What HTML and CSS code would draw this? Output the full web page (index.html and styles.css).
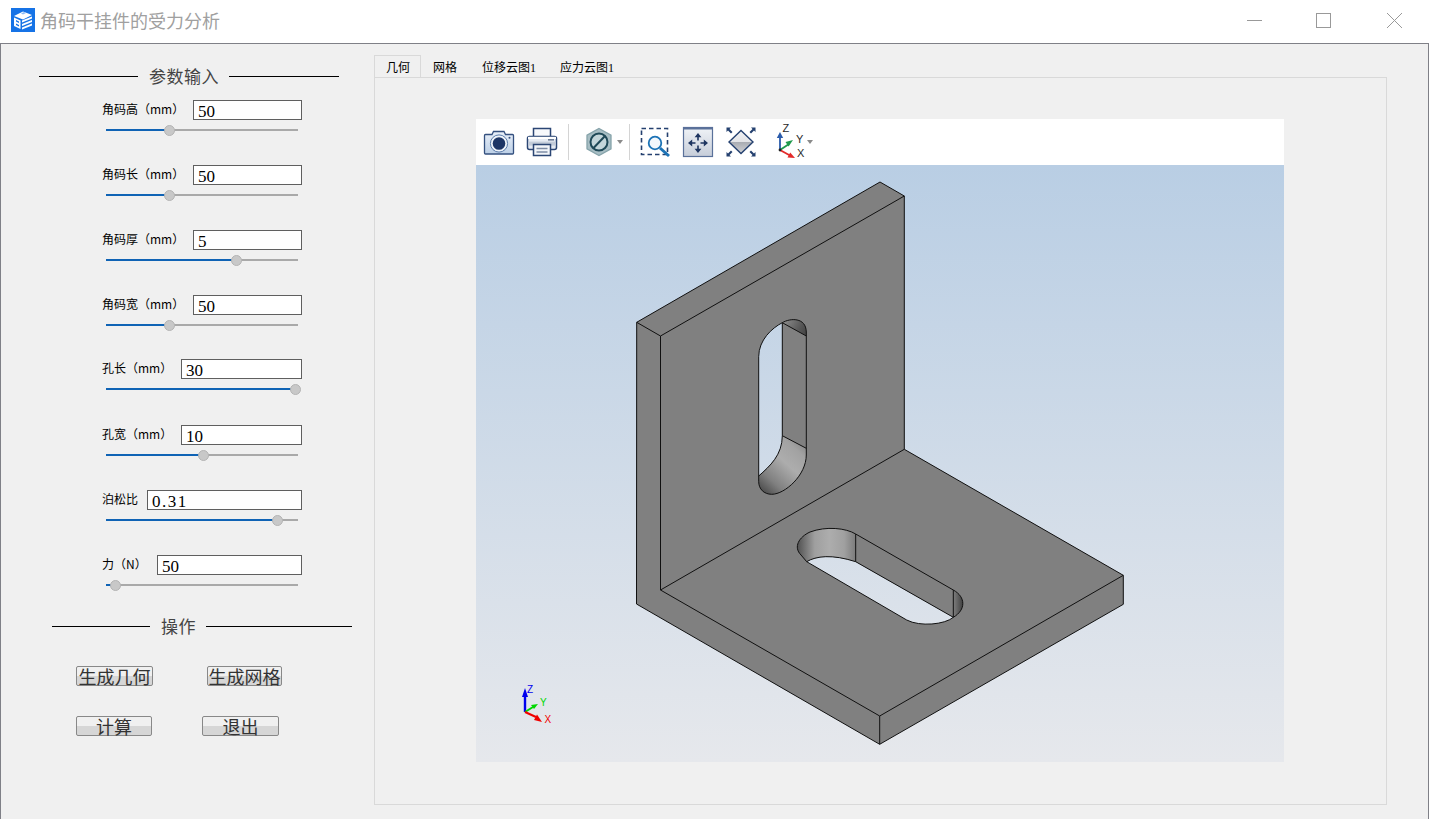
FILE: index.html
```html
<!DOCTYPE html>
<html lang="zh-CN">
<head>
<meta charset="utf-8">
<title>角码干挂件的受力分析</title>
<link rel="stylesheet" href="styles.css">
</head>
<body>
<header class="titlebar">
  <svg class="logo" viewBox="0 0 24 24" aria-hidden="true">
    <rect width="24" height="24" fill="#1673e6"/>
    <path d="M3 8 L12 3.5 L21 7 L12 11.5Z" fill="#fff"/>
    <path d="M3 9.5 L9.5 12.5 V21 L3 18Z" fill="#fff"/>
    <path d="M5 12 L8 13.5 V15 L5 13.5Z M5 15.5 L8 17 V18.5 L5 17Z" fill="#1673e6"/>
    <path d="M11 12.5 L21 8.5 V10.5 L11 14.5Z M11 16 L21 12 V14 L11 18Z M11 19.5 L21 15.5 V17.5 L11 21.5Z" fill="#fff"/>
    <path d="M10 5.5 L13 4 L15 5 L12 6.5Z" fill="#8fbdf5"/>
  </svg>
  <h1 class="app-title">角码干挂件的受力分析</h1>
  <div class="win-controls">
    <svg class="win-btn" viewBox="0 0 15 15" aria-hidden="true"><path d="M0 7.5H15" /></svg>
    <svg class="win-btn win-max" viewBox="0 0 15 15" aria-hidden="true"><rect x="0.5" y="0.5" width="14" height="14"/></svg>
    <svg class="win-btn win-close" viewBox="0 0 15 15" aria-hidden="true"><path d="M0 0L15 15M15 0L0 15"/></svg>
  </div>
</header>

<main class="window">
  <aside class="side">
    <div class="section-head head-params">
      <span class="rule rule-a"></span><span class="section-name">参数输入</span><span class="rule rule-b"></span>
    </div>

    <div class="param">
      <div class="param-top"><label class="param-label">角码高（mm）</label><input class="field f-109" value="50"></div>
      <div class="slider"><span class="slider-fill" style="width:63px"></span><span class="slider-knob" style="left:63px"></span></div>
    </div>
    <div class="param">
      <div class="param-top"><label class="param-label">角码长（mm）</label><input class="field f-109" value="50"></div>
      <div class="slider"><span class="slider-fill" style="width:63px"></span><span class="slider-knob" style="left:63px"></span></div>
    </div>
    <div class="param">
      <div class="param-top"><label class="param-label">角码厚（mm）</label><input class="field f-109" value="5"></div>
      <div class="slider"><span class="slider-fill" style="width:130px"></span><span class="slider-knob" style="left:130px"></span></div>
    </div>
    <div class="param">
      <div class="param-top"><label class="param-label">角码宽（mm）</label><input class="field f-109" value="50"></div>
      <div class="slider"><span class="slider-fill" style="width:63px"></span><span class="slider-knob" style="left:63px"></span></div>
    </div>
    <div class="param param-up">
      <div class="param-top"><label class="param-label">孔长（mm）</label><input class="field f-121" value="30"></div>
      <div class="slider"><span class="slider-fill" style="width:189px"></span><span class="slider-knob" style="left:189px"></span></div>
    </div>
    <div class="param">
      <div class="param-top"><label class="param-label">孔宽（mm）</label><input class="field f-121" value="10"></div>
      <div class="slider"><span class="slider-fill" style="width:97px"></span><span class="slider-knob" style="left:97px"></span></div>
    </div>
    <div class="param">
      <div class="param-top"><label class="param-label">泊松比</label><input class="field f-155 field-wide" value="0.31"></div>
      <div class="slider"><span class="slider-fill" style="width:171px"></span><span class="slider-knob" style="left:171px"></span></div>
    </div>
    <div class="param">
      <div class="param-top"><label class="param-label">力（N）</label><input class="field f-145" value="50"></div>
      <div class="slider"><span class="slider-fill" style="width:9px"></span><span class="slider-knob" style="left:9px"></span></div>
    </div>

    <div class="section-head head-ops">
      <span class="rule rule-c"></span><span class="section-name">操作</span><span class="rule rule-d"></span>
    </div>

    <div class="btn-row btn-row-1">
      <button class="btn btn-77">生成几何</button>
      <button class="btn btn-75">生成网格</button>
    </div>
    <div class="btn-row btn-row-2">
      <button class="btn btn-76">计算</button>
      <button class="btn btn-77">退出</button>
    </div>
  </aside>

  <section class="workspace">
    <nav class="tabs">
      <span class="tab tab-active">几何</span>
      <span class="tab tab-mesh">网格</span>
      <span class="tab">位移云图1</span>
      <span class="tab">应力云图1</span>
    </nav>
    <div class="pane">
      <div class="viewer">
        <div class="toolbar">
          <svg class="tool tool-camera" viewBox="0 0 32 32" aria-hidden="true">
            <defs><linearGradient id="camBody" x1="0" y1="0" x2="0" y2="1"><stop offset="0" stop-color="#e9f0f9"/><stop offset="1" stop-color="#bccfe6"/></linearGradient></defs>
            <path d="M2.5 8.5 H9 L10.5 5.5 H21 L22.5 8.5 H29.5 Q30.5 8.5 30.5 9.5 V27 Q30.5 28 29.5 28 H2.5 Q1.5 28 1.5 27 V9.5 Q1.5 8.5 2.5 8.5Z" fill="url(#camBody)" stroke="#34507f" stroke-width="1.3"/>
            <circle cx="16" cy="17.5" r="8.6" fill="#eef3f9" stroke="#5b7cab" stroke-width="1"/>
            <circle cx="16" cy="17.5" r="6.3" fill="#1d3566"/>
            <circle cx="26.5" cy="11.8" r="1" fill="#34507f"/>
          </svg>
          <svg class="tool tool-printer" viewBox="0 0 32 32" aria-hidden="true">
            <path d="M7.5 11 V2.5 H24.5 V11" fill="#f7f9fc" stroke="#2b4674" stroke-width="1.5"/>
            <rect x="1.5" y="10.5" width="29" height="13" rx="2" fill="#e6ebf3" stroke="#2b4674" stroke-width="1.5"/>
            <path d="M2 13 H30 V10.8 H2Z" fill="#fff"/>
            <rect x="22" y="13" width="6" height="1.6" fill="#6f7f99"/>
            <path d="M2.3 17.6 H29.7" stroke="#c3ccd9" stroke-width="4"/>
            <rect x="7.5" y="18.5" width="17" height="11" fill="#f2f5f9" stroke="#2b4674" stroke-width="1.5"/>
            <path d="M10.5 22.5 H21.5 M10.5 26 H21.5" stroke="#7d8ca5" stroke-width="1.4"/>
          </svg>
          <span class="tool-sep sep-a"></span>
          <svg class="tool tool-hex" viewBox="0 0 30 32" aria-hidden="true">
            <path d="M15 2.5 L27 9.2 V22.8 L15 29.5 L3 22.8 V9.2Z" fill="#a8bec4" stroke="#86a3aa" stroke-width="1.3"/>
            <circle cx="15" cy="16" r="8.5" fill="#c4d6da" stroke="#1f4957" stroke-width="2"/>
            <path d="M9.5 22 L21 10" stroke="#1f4957" stroke-width="2"/>
          </svg>
          <svg class="tool-caret caret-hex" viewBox="0 0 6 4" aria-hidden="true"><path d="M0 0H6L3 4Z"/></svg>
          <span class="tool-sep sep-b"></span>
          <svg class="tool tool-zoom" viewBox="0 0 32 32" aria-hidden="true">
            <rect x="2.5" y="2.5" width="26" height="26" fill="none" stroke="#24406f" stroke-width="1.6" stroke-dasharray="4.5 3"/>
            <circle cx="16" cy="17" r="6.3" fill="#f3f8fc" stroke="#1c73b6" stroke-width="1.8"/>
            <path d="M21 22 L30 30" stroke="#1c73b6" stroke-width="3"/>
          </svg>
          <svg class="tool tool-pan" viewBox="0 0 32 32" aria-hidden="true">
            <defs><linearGradient id="panBody" x1="0" y1="0" x2="0" y2="1"><stop offset="0" stop-color="#f0f3f7"/><stop offset="1" stop-color="#c6cdd9"/></linearGradient></defs>
            <rect x="1.5" y="1.5" width="29" height="29" fill="url(#panBody)" stroke="#5a719a" stroke-width="1.2"/>
            <rect x="1.5" y="1.5" width="29" height="2" fill="#5a719a"/>
            <path d="M16 9 V14.5 M16 19.5 V25 M8 17 H13.5 M18.5 17 H24" stroke="#1e3560" stroke-width="1.6"/>
            <path d="M16 7 L12.6 11.2 H19.4Z M16 27 L12.6 22.8 H19.4Z M6 17 L10.2 13.6 V20.4Z M26 17 L21.8 13.6 V20.4Z" fill="#1e3560"/>
          </svg>
          <svg class="tool tool-fit" viewBox="0 0 32 32" aria-hidden="true">
            <defs><linearGradient id="fitTop" x1="0" y1="0" x2="0" y2="1"><stop offset="0" stop-color="#f2f3f5"/><stop offset="0.5" stop-color="#e2e3e6"/><stop offset="0.5" stop-color="#a9acb2"/><stop offset="1" stop-color="#d0d2d6"/></linearGradient></defs>
            <path d="M16 4.5 L28 16 L16 27.5 L4 16Z" fill="url(#fitTop)" stroke="#24406f" stroke-width="1.4"/>
            <path d="M1.5 1.5 H6 L4.5 3 L7.5 6 L6 7.5 L3 4.5 L1.5 6Z M30.5 1.5 V6 L29 4.5 L26 7.5 L24.5 6 L27.5 3 L26 1.5Z M1.5 30.5 V26 L3 27.5 L6 24.5 L7.5 26 L4.5 29 L6 30.5Z M30.5 30.5 H26 L27.5 29 L24.5 26 L26 24.5 L29 27.5 L30.5 26Z" fill="#24406f"/>
          </svg>
          <svg class="tool tool-axis" viewBox="0 0 32 32" aria-hidden="true">
            <path d="M5 24 V11" stroke="#2a5bab" stroke-width="1.8"/>
            <path d="M5 6 L1.8 12 H8.2Z" fill="#2a5bab"/>
            <path d="M5 24 L14 18" stroke="#1f9a4c" stroke-width="1.8"/>
            <path d="M18 14 L10.5 16 L13.6 20.6Z" fill="#1f9a4c"/>
            <path d="M5 24 L15 29.5" stroke="#e32a2a" stroke-width="1.8"/>
            <path d="M20 32 L12.5 31.5 L15.2 26.5Z" fill="#e32a2a"/>
            <circle cx="5" cy="24" r="1.4" fill="#222"/>
            <text class="axis-letter" x="7.5" y="6">Z</text>
            <text class="axis-letter" x="21" y="16.5">Y</text>
            <text class="axis-letter" x="22" y="30.5">X</text>
          </svg>
          <svg class="tool-caret caret-axis" viewBox="0 0 6 4" aria-hidden="true"><path d="M0 0H6L3 4Z"/></svg>
        </div>
        <div class="canvas">
          <svg class="model" viewBox="476 165 808 597" aria-label="角码三维模型">
            <defs>
              <linearGradient id="wallBottom" gradientUnits="userSpaceOnUse" x1="760" y1="490" x2="806" y2="440">
                <stop offset="0" stop-color="#4b4b4b"/><stop offset="0.22" stop-color="#808080"/><stop offset="0.55" stop-color="#adadad"/><stop offset="0.8" stop-color="#a2a2a2"/><stop offset="1" stop-color="#808080"/>
              </linearGradient>
              <linearGradient id="wallTop" gradientUnits="userSpaceOnUse" x1="784" y1="322" x2="806" y2="334">
                <stop offset="0" stop-color="#8a8a8a"/><stop offset="0.7" stop-color="#555"/><stop offset="1" stop-color="#444"/>
              </linearGradient>
              <linearGradient id="wallLeft" gradientUnits="userSpaceOnUse" x1="797" y1="0" x2="856" y2="0">
                <stop offset="0" stop-color="#4f4f4f"/><stop offset="0.3" stop-color="#9f9f9f"/><stop offset="0.55" stop-color="#adadad"/><stop offset="0.8" stop-color="#a0a0a0"/><stop offset="1" stop-color="#7a7a7a"/>
              </linearGradient>
              <linearGradient id="wallRight" gradientUnits="userSpaceOnUse" x1="953" y1="0" x2="963" y2="0">
                <stop offset="0" stop-color="#808080"/><stop offset="1" stop-color="#3f3f3f"/>
              </linearGradient>
            </defs>

            <path class="solid" fill-rule="evenodd" d="M880 182 L904.3 196 V449.3 L1123.3 575.3 V604.3 L879.7 744.3 L636.5 604 L636.7 322.3Z
              M782.3 322.7 C772 328 758.7 340 758.7 356.7 V476 C770 466 782.3 455 782.3 435.7Z
              M806.7 561.7 C816 556 832 554 855.7 561.7 L953.3 617.3 C945 624.5 920 627 906.7 620Z"/>

            <path class="wall" d="M782.3 322.7 H806.3 V455 H782.3Z"/>
            <path fill="url(#wallTop)" d="M782.3 322.7 C790 318 806 317 806.3 332 V336 Z"/>
            <path fill="url(#wallBottom)" d="M782.3 435.7 L806.3 448.3 V455 C806.3 475 785 494.3 771.7 494.3 C764 494.3 758.7 489 758.7 481.7 V476 C770 466 782.3 455 782.3 435.7Z"/>

            <path fill="url(#wallLeft)" d="M855.7 534 C846 528 826 526 810 532 C799 537 793 547 801 555 L806.7 561.7 C816 556 832 554 855.7 561.7Z"/>
            <path class="wall" d="M855.7 534 L953.3 590 V617.3 L855.7 561.7Z"/>
            <path fill="url(#wallRight)" d="M953.3 590 C966 597 966 610 953.3 617.3Z"/>

            <g class="edges">
              <path d="M880 182 L904.3 196 V449.3 L1123.3 575.3 V604.3 L879.7 744.3 L636.5 604 L636.7 322.3Z"/>
              <path d="M636.7 322.3 L660.5 336 L904.3 196 M660.5 336 V590 L904.3 449.3 M660.5 590 L879.7 716 L1123.3 575.3 M879.7 716 V744.3"/>
              <path d="M758.7 356.7 C758.7 340 772 328 782.3 322.7 C790 318 806 317 806.3 332 V455 C806.3 475 785 494.3 771.7 494.3 C764 494.3 758.7 489 758.7 481.7Z"/>
              <path d="M782.3 322.7 V435.7 C782.3 455 770 466 758.7 476 M782.3 322.7 L806.3 336 M782.3 435.7 L806.3 448.3"/>
              <path d="M855.7 534 C846 528 826 526 810 532 C799 537 793 547 801 555 L806.7 561.7 L906.7 620 C920 627 945 624.5 953.3 617.3 C966 610 966 597 953.3 590Z"/>
              <path d="M806.7 561.7 C816 556 832 554 855.7 561.7 L953.3 617.3 M855.7 534 V561.7 M953.3 590 V617.3"/>
            </g>

            <g class="triad">
              <path d="M525 712 V694" stroke="#0000ee" stroke-width="2.4"/>
              <path d="M525 688 L522 697 H528Z" fill="#0000ee"/>
              <path d="M525 712 L533 707" stroke="#00d800" stroke-width="2"/>
              <path d="M538 704 L531 705 L534 709Z" fill="#00d800"/>
              <path d="M525 712 L536 717" stroke="#f00000" stroke-width="2"/>
              <path d="M542 722 L534 720 L537 714.5Z" fill="#f00000"/>
              <text class="triad-z" x="527" y="693">Z</text>
              <text class="triad-y" x="540" y="706">Y</text>
              <text class="triad-x" x="544.5" y="722.5">X</text>
            </g>
          </svg>
        </div>
      </div>
    </div>
  </section>
</main>
</body>
</html>
```

FILE: styles.css
```css
* { box-sizing: border-box; }

html, body {
  margin: 0;
  padding: 0;
  width: 1429px;
  height: 819px;
  overflow: hidden;
  background: #ffffff;
  font-family: "Liberation Serif", "Noto Sans CJK SC", serif;
}

/* Title bar */
.titlebar {
  display: flex;
  align-items: center;
  height: 43px;
  padding: 0 27px 3px 11px;
  background: #ffffff;
}
.logo { width: 24px; height: 24px; flex: none; }
.app-title {
  margin: 0 0 0 5px;
  font-size: 18px;
  line-height: 24px;
  font-weight: 400;
  color: #a0a0a0;
  font-family: "Noto Sans CJK SC", sans-serif;
}
.win-controls {
  margin-left: auto;
  display: flex;
  align-items: center;
  gap: 54px;
}
.win-btn { width: 15px; height: 15px; fill: none; stroke: #999999; stroke-width: 1; }
.win-close { margin-left: 2px; }

/* Window */
.window {
  display: flex;
  height: 776px;
  background: #f0f0f0;
  border: 1px solid #7f8087;
  border-bottom: 0;
}

/* Left panel */
.side {
  width: 373px;
  flex: none;
  padding-top: 20px;
}
.section-head {
  display: flex;
  align-items: center;
  height: 24px;
}
.head-params { margin: 0 0 12px 38px; }
.head-ops { margin: -6px 0 1px 51px; }
.rule { height: 1px; background: #000000; flex: none; }
.rule-a { width: 99px; }
.rule-b { width: 110px; }
.rule-c { width: 98px; }
.rule-d { width: 146px; }
.section-name {
  font-family: "Noto Sans CJK SC", sans-serif;
  font-size: 17px;
  line-height: 24px;
  letter-spacing: 0.5px;
  color: #444444;
  white-space: nowrap;
}
.head-params .section-name { margin: 0 10px 0 11px; }
.head-ops .section-name { margin: 0 10px 0 11px; }

.param {
  height: 65px;
  margin-left: 101px;
  width: 200px;
}
.param-up { margin-top: -1px; margin-bottom: 1px; }
.param-top {
  display: flex;
  align-items: center;
  justify-content: space-between;
  height: 20px;
}
.param-label {
  font-family: "Noto Sans CJK SC", sans-serif;
  font-size: 12px;
  line-height: 16px;
  color: #000000;
  margin-top: -2px;
  white-space: nowrap;
}
.field {
  height: 20px;
  padding: 4px 0 0 4px;
  border: 1px solid #5f5f5f;
  background: #ffffff;
  font-family: "Liberation Serif", serif;
  font-size: 17px;
  color: #000000;
  outline: none;
  border-radius: 0;
}
.f-109 { width: 109px; }
.f-121 { width: 121px; }
.f-155 { width: 155px; }
.f-145 { width: 145px; }
.field-wide { letter-spacing: 1.5px; }

.slider {
  position: relative;
  width: 192px;
  height: 2px;
  margin: 9px 0 0 4px;
  background: #a9a9a9;
}
.slider-fill {
  display: block;
  height: 2px;
  background: #0f63b5;
}
.slider-knob {
  position: absolute;
  top: -4px;
  width: 11px;
  height: 11px;
  margin-left: -5px;
  border-radius: 50%;
  background: #c8c8c8;
  border: 1px solid #b4b4b4;
}

.btn-row { display: flex; margin-left: 75px; }
.btn-row-1 { margin-top: 28px; gap: 54px; }
.btn-row-2 { margin-top: 30px; gap: 50px; }
.btn {
  height: 20px;
  padding: 0 0 2px;
  border: 1px solid #888888;
  border-radius: 2px;
  background: linear-gradient(#f0f0f0 0, #f0f0f0 50%, #d6d6d6 50%, #d6d6d6 100%);
  font-family: "Noto Sans CJK SC", sans-serif;
  font-size: 18px;
  line-height: 18px;
  color: #333333;
  overflow: visible;
  white-space: nowrap;
}
.btn-75 { width: 75px; }
.btn-76 { width: 76px; }
.btn-77 { width: 77px; }

/* Tabs */
.workspace {
  flex: 1;
  margin-right: 41px;
  padding-top: 11px;
}
.tabs {
  display: flex;
  height: 22px;
}
.tab {
  padding: 2px 12px 0;
  font-size: 12px;
  line-height: 22px;
  color: #000000;
  white-space: nowrap;
}
.tab-mesh { padding-right: 13px; }
.tab-active {
  border: 1px solid #d9d9d9;
  border-bottom: 0;
  padding: 1px 11px 0;
  width: 47px;
  background: #f0f0f0;
}
.pane {
  height: 728px;
  border: 1px solid #d9d9d9;
  padding: 41px 0 0 101px;
}

/* Viewer */
.viewer { width: 808px; height: 643px; }
.toolbar {
  display: flex;
  align-items: center;
  height: 46px;
  padding-left: 7px;
  background: #ffffff;
}
.tool { width: 32px; height: 32px; flex: none; overflow: visible; }
.tool-printer { margin-left: 11px; }
.tool-sep { width: 1px; height: 36px; background: #d4d4d4; flex: none; }
.sep-a { margin-left: 10px; }
.tool-hex { width: 30px; margin-left: 15px; }
.tool-caret { width: 6px; height: 4px; fill: #8a8a8a; flex: none; }
.caret-hex { margin-left: 3px; }
.sep-b { margin-left: 6px; }
.tool-zoom { margin-left: 9px; }
.tool-pan { margin-left: 11px; }
.tool-fit { margin-left: 11px; }
.tool-axis { margin-left: 18px; }
.caret-axis { margin-left: 0; }
.axis-letter {
  font-family: "Liberation Sans", sans-serif;
  font-size: 11px;
  fill: #2a2a2a;
}

.canvas {
  height: 597px;
  background: linear-gradient(#b9cee4, #e6e8ec);
}
.model { display: block; width: 808px; height: 597px; }
.solid { fill: #808080; }
.wall { fill: #808080; }
.edges path { fill: none; stroke: #101010; stroke-width: 1; }
.triad text {
  font-family: "Liberation Sans", sans-serif;
  font-size: 10px;
}
.triad-z { fill: #0000ee; }
.triad-y { fill: #00d800; }
.triad-x { fill: #f00000; }
```
